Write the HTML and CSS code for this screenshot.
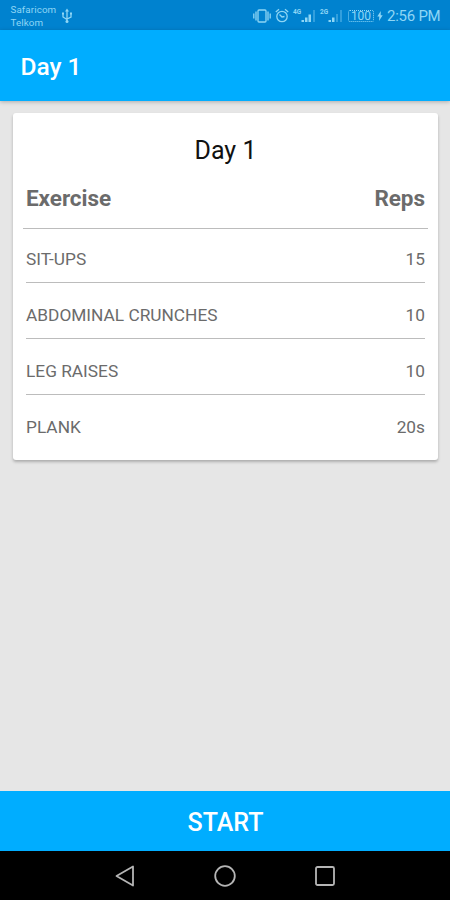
FILE: index.html
```html
<!DOCTYPE html>
<html lang="en">
<head>
  <meta charset="UTF-8" />
  <meta name="viewport" content="width=device-width, initial-scale=1.0" />
  <title>Day 1</title>
  <link rel="stylesheet" href="styles.css">
</head>
<body>
  <div class="status-bar">
    <div class="carriers">
      <span>Safaricom</span>
      <span>Telkom</span>
    </div>
    <svg class="icon usb" width="12" height="16" viewBox="0 0 12 16">
      <path d="M6 3v10M2 6v3l4 2.500M10 6v3l-4 2" />
      <path class="solid" d="M6 0.500l2 3H4zM1 4.500h2v2H1zM9 4.500h2v2H9z" />
      <circle class="solid" cx="6" cy="13.500" r="1.500" />
    </svg>
    <div class="indicators">
      <svg class="icon vibrate" width="18" height="16" viewBox="0 0 18 16">
        <rect x="5" y="2" width="8" height="12" rx="1" />
        <path d="M3 3.500v9M15 3.500v9M0.800 5.500v5M17.200 5.500v5" />
      </svg>
      <svg class="icon alarm" width="14" height="16" viewBox="0 0 14 16">
        <circle cx="7" cy="8.500" r="5.200" />
        <path d="M4.500 6.500L7 9l2.500-.5M0.800 4L4 1.300M13.200 4L10 1.300" />
      </svg>
      <div class="signal">
        <span class="net">4G</span>
        <svg class="bars" width="15" height="14" viewBox="0 0 15 14">
          <path d="M0.500 11H3v2H0.500zM4 8.500h2.500V13H4zM7.500 5.500H10V13H7.500z" />
          <path class="dim" d="M12 1h2v12h-2z" />
        </svg>
      </div>
      <div class="signal">
        <span class="net">2G</span>
        <svg class="bars" width="15" height="14" viewBox="0 0 15 14">
          <path d="M0.500 11H3v2H0.500zM4 8.500h2.500V13H4z" />
          <path class="dim" d="M8 5h2v8H8zM12 1h2v12h-2z" />
        </svg>
      </div>
      <div class="battery">100</div>
      <svg class="bolt" width="6" height="10" viewBox="0 0 6 10">
        <path d="M3.800 0L0.300 5.600h2L2 10l3.700-5.700h-2z" />
      </svg>
      <span class="time">2:56 PM</span>
    </div>
  </div>

  <header class="app-bar">
    <h1>Day 1</h1>
  </header>

  <main class="content">
    <section class="card">
      <h2>Day 1</h2>
      <div class="table-head">
        <span>Exercise</span>
        <span>Reps</span>
      </div>
      <ul class="exercises">
        <li><span>SIT-UPS</span><span class="reps">15</span></li>
        <li><span>ABDOMINAL CRUNCHES</span><span class="reps">10</span></li>
        <li><span>LEG RAISES</span><span class="reps">10</span></li>
        <li><span>PLANK</span><span class="reps">20s</span></li>
      </ul>
    </section>
  </main>

  <button class="start">START</button>

  <nav class="nav-bar">
    <svg width="24" height="24" viewBox="0 0 24 24">
      <path d="M20 2.500v19L3.500 12z" />
    </svg>
    <svg width="24" height="24" viewBox="0 0 24 24">
      <circle cx="12" cy="12" r="9.800" />
    </svg>
    <svg width="24" height="24" viewBox="0 0 24 24">
      <rect x="3" y="3" width="18" height="18" rx="1.500" />
    </svg>
  </nav>
</body>
</html>
```

FILE: styles.css
```css
:root {
  --primary: #00adff;
  --primary-dark: #0082cf;
  --status-text: #8fd6f5;
  --background: #e6e6e6;
  --grey-text: #6b6b6b;
  --divider: #bcbcbc;
}

* {
  box-sizing: border-box;
}

body {
  margin: 0;
  height: 100vh;
  display: flex;
  flex-direction: column;
  overflow: hidden;
  background: var(--background);
  font-family: Roboto, sans-serif;
}

/* status bar */
.status-bar {
  height: 30px;
  flex: none;
  display: flex;
  align-items: center;
  padding: 2px 10px 0 10.500px;
  background: var(--primary-dark);
  color: var(--status-text);
}

.carriers {
  display: flex;
  flex-direction: column;
  width: 50px;
  font-size: 9.800px;
  line-height: 13.500px;
  letter-spacing: 0.100px;
}

.icon {
  fill: none;
  stroke: var(--status-text);
  stroke-width: 1.300;
}

.solid {
  fill: var(--status-text);
  stroke: none;
}

.indicators {
  display: flex;
  align-items: center;
  margin-left: auto;
}

.alarm {
  margin-left: 4.500px;
}

.signal {
  display: flex;
  align-items: flex-start;
  margin-left: 4px;
}

.net {
  width: 8px;
  font-size: 6.500px;
  line-height: 7px;
  font-weight: 700;
}

.bars,
.bolt {
  fill: var(--status-text);
}

.dim {
  opacity: 0.35;
}

.battery {
  width: 26px;
  height: 12px;
  margin-left: 5px;
  border: 1px dotted var(--status-text);
  border-radius: 2px;
  font-size: 12px;
  line-height: 11px;
  text-align: center;
}

.bolt {
  margin: 0 4px 0 3px;
}

.time {
  width: 53px;
  font-size: 15px;
  line-height: 18px;
  letter-spacing: -0.250px;
  white-space: nowrap;
}

/* app bar */
.app-bar {
  height: 71px;
  flex: none;
  display: flex;
  align-items: center;
  padding: 2px 20.500px 0;
  background: var(--primary);
  box-shadow: 0 1px 4px rgba(0, 0, 0, 0.25);
}

.app-bar h1 {
  margin: 0;
  font-size: 24.500px;
  font-weight: 500;
  color: #fff;
}

/* card */
.content {
  flex: 1;
  padding: 12px 12px 0 13px;
}

.card {
  height: 347px;
  padding: 23px 10px 0;
  background: #fff;
  border-radius: 3px;
  box-shadow: 0 2px 3px rgba(0, 0, 0, 0.25);
}

.card h2 {
  margin: 0;
  font-size: 25px;
  line-height: 30px;
  font-weight: 400;
  text-align: center;
  color: #111;
}

.table-head {
  display: flex;
  justify-content: space-between;
  height: 63px;
  padding: 17px 3px 0;
  border-bottom: 1px solid var(--divider);
  font-size: 22.500px;
  line-height: 31px;
  font-weight: 700;
  letter-spacing: -0.050px;
  color: var(--grey-text);
}

.exercises {
  margin: 0;
  padding: 0 3px;
  list-style: none;
}

.exercises li {
  display: flex;
  justify-content: space-between;
  height: 56px;
  padding-top: 22px;
  font-size: 17.300px;
  line-height: 20px;
  color: var(--grey-text);
}

.exercises li:first-child {
  height: 54px;
  padding-top: 20px;
}

.exercises li:not(:last-child) {
  border-bottom: 1px solid var(--divider);
}

.start {
  height: 60px;
  flex: none;
  border: 0;
  padding: 2px 0 0 1px;
  background: var(--primary);
  color: #fff;
  font: 500 25px Roboto, sans-serif;
}

/* system navigation */
.nav-bar {
  height: 49px;
  flex: none;
  display: flex;
  justify-content: center;
  align-items: center;
  gap: 76px;
  background: #000;
}

.nav-bar svg {
  fill: none;
  stroke: #b5b5b5;
  stroke-width: 1.800;
  stroke-linejoin: round;
}
```
